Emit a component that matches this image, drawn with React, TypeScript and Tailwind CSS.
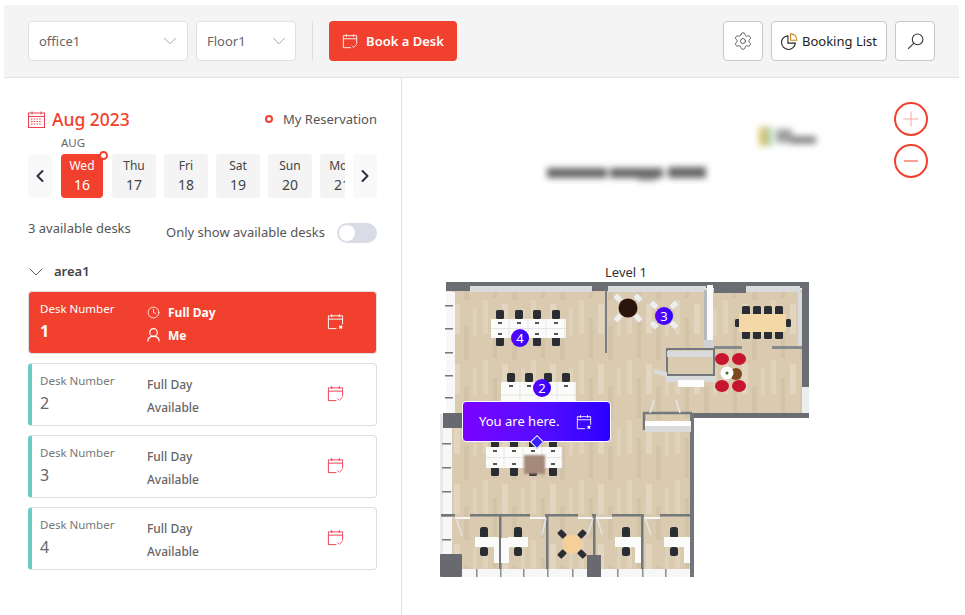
import React from 'react';
import { ChevronDown, ChevronLeft, ChevronRight, Clock, Settings } from 'lucide-react';

const days = [
  { name: 'Thu', date: '17' },
  { name: 'Fri', date: '18' },
  { name: 'Sat', date: '19' },
  { name: 'Sun', date: '20' },
  { name: 'Mon', date: '21' },
];

const CalendarIcon = ({ className, mark }: { className?: string; mark: 'check' | 'x' }) => (
  <svg className={className} viewBox="0 0 18 18" fill="none" stroke="currentColor" strokeWidth={1}>
    <path d="M10 16.5H1.5V3h15v9" />
    <path d="M1.5 6.5h15M5 1.2v3.2M13 1.2v3.2" />
    {mark === 'check' ? (
      <path d="M11 14.2l2 2 3.6-3.4" strokeOpacity={0.9} />
    ) : (
      <path d="M13 13.5l3 3M16 13.5l-3 3" strokeWidth={1.4} />
    )}
  </svg>
);

const Chair = ({ x, y }: { x: number; y: number }) => (
  <rect x={x - 4} y={y} width={8} height={9} rx={1.5} fill="#2b2d30" />
);

const Desks = ({ x, y, w, h, seats }: { x: number; y: number; w: number; h: number; seats: number[] }) => (
  <g>
    <rect x={x} y={y} width={w} height={h} fill="#fbfbfa" />
    {seats.map((s) => (
      <g key={s}>
        <rect x={s - 2} y={y + 3} width={4} height={2} fill="#50565c" />
        <rect x={s - 2} y={y + h - 5} width={4} height={2} fill="#50565c" />
        <line x1={s + 9} y1={y} x2={s + 9} y2={y + h} stroke="#d8d8d8" strokeWidth={0.6} />
      </g>
    ))}
    <line x1={x} y1={y + h / 2} x2={x + w} y2={y + h / 2} stroke="#d8d8d8" strokeWidth={0.6} />
  </g>
);

const FloorPlan = () => (
  <svg className="block h-full w-full" viewBox="402 78 557 537">
    <defs>
      <pattern id="planks" width="48" height="60" patternUnits="userSpaceOnUse">
        <rect width="48" height="60" fill="#d9cab0" />
        <rect x="3" y="0" width="5" height="34" fill="#e0d3bc" />
        <rect x="13" y="18" width="4" height="40" fill="#d2c2a6" />
        <rect x="22" y="4" width="6" height="30" fill="#e2d6c1" />
        <rect x="32" y="26" width="5" height="34" fill="#d3c4a9" />
        <rect x="41" y="8" width="4" height="28" fill="#dfd2ba" />
      </pattern>
      <filter id="soft" x="-20%" y="-80%" width="140%" height="260%">
        <feGaussianBlur stdDeviation="3.2" />
      </filter>
      <filter id="softer" x="-20%" y="-20%" width="140%" height="140%">
        <feGaussianBlur stdDeviation="1" />
      </filter>
      <filter id="plan" x="-2%" y="-2%" width="104%" height="104%">
        <feGaussianBlur stdDeviation="0.35" />
      </filter>
    </defs>

    {/* blurred building name and logo */}
    <g filter="url(#soft)" fill="#666666">
      <rect x="547" y="168" width="60" height="10" />
      <rect x="610" y="168" width="53" height="10" />
      <rect x="638" y="175" width="18" height="6" opacity={0.6} />
      <rect x="668" y="167" width="38" height="11" />
    </g>
    <g filter="url(#soft)">
      <rect x="759" y="127" width="7" height="19" fill="#d8c46a" />
      <rect x="766" y="127" width="6" height="19" fill="#a9cfa8" />
      <rect x="776" y="129" width="16" height="14" fill="#a0a0a0" />
      <rect x="790" y="136" width="26" height="8" fill="#8a8a8a" />
    </g>

    <g filter="url(#plan)">
      {/* shell and floor */}
      <path d="M446 282H809V418H694V577H440V414H446Z" fill="#e8e9ea" />
      <path d="M452 290H802V413H692V570H452Z" fill="url(#planks)" />
      <path d="M446 282H809V387H802V288H446Z" fill="#6a6e73" />
      <rect x="446" y="288" width="24" height="3" fill="#6a6e73" />
      <rect x="470" y="286" width="122" height="6" fill="#d8dadb" />
      <rect x="592" y="288" width="16" height="3" fill="#6a6e73" />
      <rect x="608" y="286" width="98" height="6" fill="#d8dadb" />
      <rect x="746" y="286" width="54" height="6" fill="#d8dadb" />
      <rect x="798" y="292" width="4" height="54" fill="#d8dadb" />
      <rect x="692" y="413" width="117" height="5" fill="#6a6e73" />
      <rect x="690" y="413" width="4" height="164" fill="#72767b" />
      <rect x="802" y="387" width="7" height="26" fill="#eceded" />
      <rect x="446" y="292" width="9" height="121" fill="#f7f7f7" />
      <rect x="443" y="428" width="9" height="126" fill="#f7f7f7" />
      {[305, 328, 352, 375, 397].map((y) => (
        <rect key={y} x="445" y={y} width="8" height="1.5" fill="#777" />
      ))}
      {[443, 467, 491, 515, 539].map((y) => (
        <rect key={y} x="442" y={y} width="9" height="1.5" fill="#777" />
      ))}
      <rect x="443" y="413" width="19" height="15" fill="#676b70" />

      {/* top rooms */}
      <rect x="605" y="290" width="2" height="63" fill="#7a7f85" />
      <rect x="707" y="285" width="6" height="55" fill="#fbfbfb" />
      <rect x="704" y="290" width="3" height="50" fill="#b7babc" />
      <rect x="704" y="340" width="10" height="9" fill="#cfd1d2" />
      <rect x="714" y="286" width="32" height="7" fill="#6a6e73" />
      <rect x="714" y="346" width="28" height="3" fill="#84898c" />
      <rect x="772" y="346" width="30" height="3" fill="#84898c" />
      <path d="M667 349h47v26h-47z" fill="#d9cab0" stroke="#73787d" strokeWidth={2} />
      <rect x="667" y="351" width="46" height="6" fill="#d8dadb" />
      <rect x="666" y="376" width="50" height="6" fill="#d8dadb" />
      <rect x="678" y="380" width="26" height="7" fill="#fdfdfd" />
      <path d="M654 369l13 3v5l-14-4z" fill="#d8dadb" />

      {/* entry */}
      <path d="M644 430v-17h48" fill="none" stroke="#73787d" strokeWidth={2.5} />
      <rect x="645" y="421" width="46" height="5" fill="#fdfdfd" />
      <rect x="645" y="426" width="46" height="6" fill="#d8dadb" />
      <path d="M654 400l-4 13M676 400l4 13" stroke="#e8e8e8" strokeWidth={1.5} />

      {/* round tables */}
      {[
        [618, 298], [638, 298], [618, 318], [638, 318],
        [654, 305], [674, 305], [654, 325], [674, 325],
      ].map(([x, y]) => (
        <rect
          key={`${x}-${y}`}
          x={x - 4}
          y={y - 3}
          width={8}
          height={6}
          rx={1}
          fill="#eeeeea"
          stroke="#c9c9c4"
          strokeWidth={0.5}
          transform={`rotate(${(x - 628) * (y - 308) > 0 || (x - 664) * (y - 315) > 0 ? 45 : -45} ${x} ${y})`}
        />
      ))}
      <circle cx="628" cy="308" r="9.5" fill="#2b1508" />

      {/* meeting room */}
      {[746, 757, 768, 779].map((x) => (
        <g key={x}>
          <Chair x={x} y={306} />
          <Chair x={x} y={330} />
        </g>
      ))}
      <rect x="735" y="319" width="5" height="8" rx={1.5} fill="#2b2d30" />
      <rect x="786" y="319" width="5" height="8" rx={1.5} fill="#2b2d30" />
      <rect x="739" y="314" width="47" height="18" fill="#f5d8a8" />

      {/* lounge */}
      {[
        [722, 359], [739, 359], [722, 386], [739, 386],
      ].map(([x, y]) => (
        <ellipse key={`${x}-${y}`} cx={x} cy={y} rx="7" ry="6" fill="#c5132f" />
      ))}
      <circle cx="736" cy="374" r="6" fill="#7a4a24" />
      <circle cx="727" cy="373" r="6.5" fill="#fdfdfd" />
      <circle cx="727" cy="373" r="1.5" fill="#3f6b2b" />

      {/* open desks */}
      {[500, 519, 537, 556].map((x) => (
        <g key={x}>
          <Chair x={x} y={310} />
          <Chair x={x} y={337} />
        </g>
      ))}
      <Desks x={491} y={319} w={75} h={19} seats={[500, 519, 537, 556]} />
      {[511, 529, 548, 566].map((x) => (
        <Chair key={x} x={x} y={373} />
      ))}
      <Desks x={501} y={382} w={75} h={26} seats={[511, 529, 548, 566]} />
      {[495, 514, 533, 553].map((x) => (
        <g key={x}>
          <Chair x={x} y={439} />
          <Chair x={x} y={467} />
        </g>
      ))}
      <Desks x={486} y={447} w={76} h={21} seats={[495, 514, 533, 553]} />
      <rect x="524" y="455" width="21" height="19" fill="#a58a7c" filter="url(#softer)" />

      {/* offices along the bottom */}
      {[[441, 455], [470, 530], [545, 578], [592, 596], [612, 644], [660, 690]].map(([a, b]) => (
        <rect key={a} x={a} y="514" width={b - a} height="2.5" fill="#73787d" />
      ))}
      <rect x="455" y="517" width="15" height="2" fill="#f7f7f7" />
      <rect x="530" y="517" width="15" height="2" fill="#f7f7f7" />
      <rect x="578" y="517" width="14" height="2" fill="#f7f7f7" />
      <rect x="596" y="517" width="16" height="2" fill="#f7f7f7" />
      <rect x="644" y="517" width="16" height="2" fill="#f7f7f7" />
      {[499, 546, 593, 641].map((x) => (
        <rect key={x} x={x} y="515" width="2.5" height="60" fill="#73787d" />
      ))}
      <path d="M456 518l6 18M546 518l-4 17M593 518l-5 16M597 518l5 16M645 518l6 17" stroke="#e4e4e4" strokeWidth={1.5} />
      {[484, 518, 626, 674].map((x) => (
        <g key={x}>
          <rect x={x - 4} y="527" width="8" height="11" rx={2.5} fill="#2b2d30" />
          <rect x={x - 4} y="547" width="8" height="9" rx={2.5} fill="#2b2d30" />
        </g>
      ))}
      <rect x="475" y="537" width="23" height="10" fill="#fbfbfa" />
      <rect x="494" y="538" width="5" height="25" fill="#fbfbfa" />
      <rect x="501" y="538" width="8" height="25" fill="#fbfbfa" />
      <rect x="508" y="537" width="20" height="10" fill="#fbfbfa" />
      <rect x="615" y="537" width="21" height="10" fill="#fbfbfa" />
      <rect x="635" y="537" width="6" height="26" fill="#fbfbfa" />
      <rect x="664" y="537" width="21" height="10" fill="#fbfbfa" />
      <rect x="684" y="537" width="6" height="26" fill="#fbfbfa" />
      {[
        [562, 534], [582, 534], [562, 554], [582, 554],
      ].map(([x, y]) => (
        <rect key={`${x}-${y}`} x={x - 4} y={y - 3} width={8} height={6} rx={1} fill="#2b2d30" transform={`rotate(${(x - 572) * (y - 544) > 0 ? 45 : -45} ${x} ${y})`} />
      ))}
      <circle cx="572" cy="544" r="9.5" fill="#f6cf98" />

      {/* bottom band */}
      <rect x="440" y="569" width="250" height="8" fill="#f7f7f7" />
      {[476, 500, 523, 547, 572, 594, 617, 642, 665].map((x) => (
        <rect key={x} x={x} y="569" width="1.5" height="8" fill="#8a8e92" />
      ))}
      <rect x="440" y="554" width="22" height="23" rx={1} fill="#676b70" />
      <rect x="587" y="555" width="14" height="22" fill="#676b70" />
    </g>
  </svg>
);

const Pin = ({ label, className }: { label: string; className: string }) => (
  <div className={`absolute flex h-[18px] w-[18px] items-center justify-center rounded-full bg-gradient-to-r from-[#5b00ff] to-[#2a00ff] text-[13px] leading-none text-white ${className}`}>
    {label}
  </div>
);

const DeskCard = ({ number }: { number: string }) => (
  <div className="flex h-[63px] items-center rounded border border-[#dcdde5] border-l-4 border-l-[#6ccbc7] pl-2 text-[#666]">
    <div className="w-[107px] pb-[4px]">
      <div className="text-[11.5px] leading-[18px] text-[#777]">Desk Number</div>
      <div className="mt-[2px] text-[16px] leading-[22px]">{number}</div>
    </div>
    <div className="flex-1 pt-[2px] text-[12px] font-medium leading-[23px]">
      <div>Full Day</div>
      <div>Available</div>
    </div>
    <CalendarIcon mark="check" className="mb-[3px] mr-[32px] h-[17px] w-[17px] text-[#ee3f50]" />
  </div>
);

export default function App() {
  return (
    <div className="h-[615px] w-[965px] overflow-hidden bg-white pl-[4px] pr-[6px] pt-[5px] font-['Noto_Sans',sans-serif] text-[#333]">
      {/* Toolbar */}
      <div className="flex h-[73px] items-center border-b border-[#dfdfe5] bg-[#f4f4f4] pl-[24px] pr-[24px]">
        <div className="flex h-10 w-[160px] items-center justify-between rounded border border-[#dfe0e8] bg-white pl-[10px] pr-[6px] text-[13px] text-[#666]">
          <span className="mt-[2px]">office1</span>
          <ChevronDown size={22} strokeWidth={0.8} className="text-[#888]" />
        </div>
        <div className="ml-2 flex h-10 w-[100px] items-center justify-between rounded border border-[#dfe0e8] bg-white pl-[10px] pr-[5px] text-[13px] text-[#666]">
          <span className="mt-[2px]">Floor1</span>
          <ChevronDown size={22} strokeWidth={0.8} className="text-[#888]" />
        </div>
        <div className="ml-4 h-10 w-px bg-[#dcdcdc]" />
        <button className="ml-4 flex h-10 w-[128px] items-center justify-center gap-[8px] rounded bg-[#f1412e] text-[13px] font-semibold text-white">
          <CalendarIcon mark="check" className="h-[16px] w-[16px]" />
          <span className="mt-[2px]">Book a Desk</span>
        </button>
        <button className="ml-auto flex h-10 w-10 items-center justify-center rounded border border-[#c8c8c8] bg-white text-[#333]">
          <Settings size={20} strokeWidth={0.9} />
        </button>
        <button className="ml-2 flex h-10 w-[116px] items-center justify-center gap-[4px] rounded border border-[#c8c8c8] bg-white text-[13px] text-[#222]">
          <svg className="h-[17px] w-[17px]" viewBox="0 0 16 16" fill="none" stroke="#222" strokeWidth={1}>
            <path d="M6.5 2.5a6.5 6.5 0 1 0 7 7h-7z" />
            <path d="M9 .8a6 6 0 0 1 6 6H9z" stroke="#c98a1e" />
          </svg>
          <span className="mt-[2px]">Booking List</span>
        </button>
        <button className="ml-2 flex h-10 w-10 items-center justify-center rounded border border-[#c8c8c8] bg-white">
          <svg className="h-[17px] w-[17px]" viewBox="0 0 16 16" fill="none" stroke="#333" strokeWidth={1}>
            <circle cx="10" cy="6" r="5" />
            <path d="M6.5 9.5L1 15" />
          </svg>
        </button>
      </div>

      <div className="flex h-[537px]">
        {/* Left panel */}
        <div className="w-[398px] border-r border-[#dfdfe5] pl-[24px] pr-[24px]">
          <div className="mt-[29px] flex h-6 items-center">
            <svg className="h-[17px] w-[17px] text-[#ee3f50]" viewBox="0 0 17 17" fill="none" stroke="currentColor" strokeWidth={1}>
              <rect x="0.5" y="2" width="16" height="14.5" />
              <path d="M.5 5.5h16M4 .5v3M13 .5v3" />
              <path d="M3 8h11M3 10.5h11M3 13h11" strokeDasharray="1.5 1.2" />
            </svg>
            <span className="ml-[7px] text-[17.5px] font-medium leading-6 text-[#f1412e]">Aug 2023</span>
            <span className="ml-auto h-2 w-2 -translate-x-px rounded-full border-2 border-[#f1412e]" />
            <span className="ml-[9px] mt-[2px] text-[13px] text-[#555]">My Reservation</span>
          </div>

          <div className="ml-[33px] mt-[3px] text-[11.5px] leading-[18px] text-[#666]">AUG</div>
          <div className="mt-[2px] flex h-11 items-stretch">
            <div className="flex w-6 items-center justify-center rounded bg-[#f9f9f9] text-[#2c3440]">
              <ChevronLeft size={20} strokeWidth={2.5} />
            </div>
            <div className="relative ml-[9px] flex w-[42px] flex-col items-center justify-center rounded bg-[#f1412e] pb-[2px] text-white">
              <span className="text-[12px] leading-[19px]">Wed</span>
              <span className="text-[14px] leading-[19px]">16</span>
              <span className="absolute -right-[5px] -top-[3px] h-[9px] w-[9px] rounded-full border-2 border-[#f1412e] bg-white" />
            </div>
            <div className="ml-[9px] flex w-[233px] gap-2 overflow-hidden">
              {days.map((d) => (
                <div key={d.date} className="flex w-11 shrink-0 flex-col items-center justify-center rounded bg-[#f4f4f4] pb-[2px] text-[#444]">
                  <span className="text-[12px] leading-[19px]">{d.name}</span>
                  <span className="text-[14px] leading-[19px]">{d.date}</span>
                </div>
              ))}
            </div>
            <div className="ml-2 flex w-6 items-center justify-center rounded bg-[#f9f9f9] text-[#2c3440]">
              <ChevronRight size={20} strokeWidth={2.5} />
            </div>
          </div>

          <div className="mt-[21px] flex h-[24px] items-start justify-between">
            <span className="text-[13px] leading-[18px] text-[#555]">3 available desks</span>
            <div className="mt-[4px] flex h-5 items-center gap-3">
              <span className="text-[13px] text-[#555]">Only show available desks</span>
              <span className="flex h-5 w-10 items-center rounded-full bg-[#d9dce6] pl-[2px]">
                <span className="h-4 w-4 rounded-full bg-white" />
              </span>
            </div>
          </div>

          <div className="mt-[17px] flex h-6 items-center gap-[6px] text-[13px] font-semibold text-[#444]">
            <ChevronDown size={24} strokeWidth={0.8} className="-ml-[4px] text-[#333]" />
            area1
          </div>

          <div className="mt-[7px] flex flex-col gap-[9px]">
            <div className="flex h-[63px] items-center rounded border border-[#dfdfe5] bg-[#f1412e] pl-[11px] text-white">
              <div className="w-[107px] pb-[4px]">
                <div className="text-[11.5px] leading-[18px]">Desk Number</div>
                <div className="mt-[2px] text-[16px] font-bold leading-[22px]">1</div>
              </div>
              <div className="flex-1 pt-[2px] text-[12px] font-bold leading-[23px]">
                <div className="flex items-center gap-[8px]">
                  <Clock size={13} strokeWidth={1.5} />
                  Full Day
                </div>
                <div className="flex items-center gap-[8px]">
                  <svg className="h-[14px] w-[13px]" viewBox="0 0 13 14" fill="none" stroke="currentColor" strokeWidth={1.2}>
                    <circle cx="6.5" cy="4.5" r="3.8" />
                    <path d="M.8 13.5c0-3.4 2.5-5.2 5.7-5.2s5.7 1.8 5.7 5.2" />
                  </svg>
                  Me
                </div>
              </div>
              <CalendarIcon mark="x" className="mb-[3px] mr-[32px] h-[17px] w-[17px]" />
            </div>
            {['2', '3', '4'].map((n) => (
              <DeskCard key={n} number={n} />
            ))}
          </div>
        </div>

        {/* Map */}
        <div className="relative flex-1">
          <FloorPlan />
          <div className="absolute left-[203px] top-[185px] text-[13px] leading-[18px] text-[#333]">Level 1</div>
          <Pin label="4" className="left-[109px] top-[251px]" />
          <Pin label="3" className="left-[253px] top-[229px]" />
          <Pin label="2" className="left-[131px] top-[301px]" />
          <div className="absolute left-[60px] top-[323px] flex h-[41px] w-[149px] items-center rounded border border-white bg-gradient-to-r from-[#7a00ff] to-[#2a00ff] pl-[16px] text-[13px] text-white">
            You are here.
            <CalendarIcon mark="x" className="ml-[17px] h-[16px] w-[16px]" />
            <span className="absolute bottom-[-6px] left-[69px] h-[10px] w-[10px] rotate-45 border border-white bg-[#3a20ff]" />
          </div>
          <div className="absolute left-[492px] top-[24px] flex h-[34px] w-[34px] items-center justify-center rounded-full border-2 border-[#f1412e] text-[#f5a8a0]">
            <svg className="h-4 w-4" viewBox="0 0 16 16" stroke="currentColor" strokeWidth={1}>
              <path d="M8 .5v15M.5 8h15" />
            </svg>
          </div>
          <div className="absolute left-[492px] top-[66px] flex h-[34px] w-[34px] items-center justify-center rounded-full border-2 border-[#f1412e] text-[#f1412e]">
            <svg className="h-4 w-4" viewBox="0 0 16 16" stroke="currentColor" strokeWidth={1}>
              <path d="M1 8h14" />
            </svg>
          </div>
        </div>
      </div>
    </div>
  );
}
